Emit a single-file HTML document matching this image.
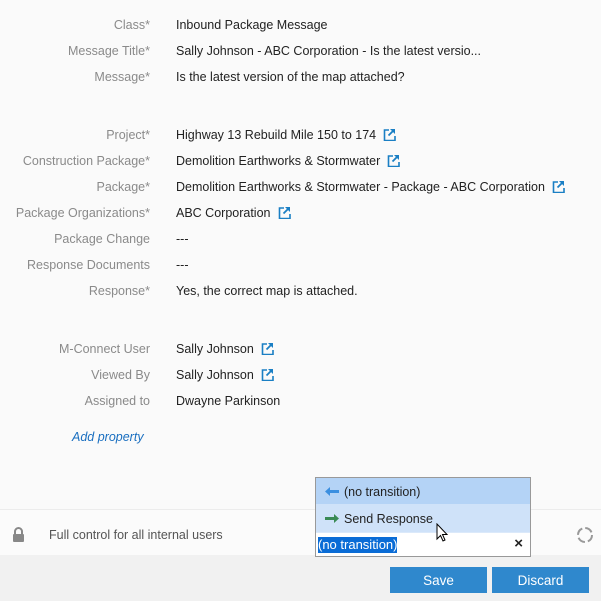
<html><head><style>
body{margin:0;width:601px;height:601px;background:#fafafa;font-family:"Liberation Sans",sans-serif;font-size:12.5px;color:#222;position:relative;overflow:hidden}
.r{position:absolute;left:0;height:20px;line-height:22px;white-space:nowrap}
.l{position:absolute;right:451px;color:#8a8a8a;text-align:right}
.v{position:absolute;left:176px}
.ic{display:inline-block;vertical-align:-2px;margin-left:7px}
.bar{position:absolute;left:0;top:509px;width:601px;height:46px;background:#fbfbfb;border-top:1px solid #ececec}
.foot{position:absolute;left:0;top:555px;width:601px;height:46px;background:#f1f1f1}
.btn{position:absolute;top:567px;height:26px;line-height:28px;background:#2f88cd;color:#fff;text-align:center;font-size:13.5px}
</style></head><body>
<div class="bar"></div><div class="foot"></div>
<svg width="0" height="0" style="position:absolute"><defs><g id="ext"><path d="M6 2H1.5v10.5H12V8" fill="none" stroke="#1a7fc4" stroke-width="1.6"/><path d="M7 1h5v5z" fill="#1a7fc4"/><path d="M5.5 7.5L11 2" stroke="#1a7fc4" stroke-width="1.8"/></g></defs></svg>
<div class="r" style="top:14px;width:601px"><span class="l">Class*</span><span class="v">Inbound Package Message</span></div>
<div class="r" style="top:40px;width:601px"><span class="l">Message Title*</span><span class="v">Sally Johnson - ABC Corporation - Is the latest versio...</span></div>
<div class="r" style="top:66px;width:601px"><span class="l">Message*</span><span class="v">Is the latest version of the map attached?</span></div>
<div class="r" style="top:124px;width:601px"><span class="l">Project*</span><span class="v">Highway 13 Rebuild Mile 150 to 174<svg class="ic" width="13" height="13"><use href="#ext"/></svg></span></div>
<div class="r" style="top:150px;width:601px"><span class="l">Construction Package*</span><span class="v">Demolition Earthworks &amp; Stormwater<svg class="ic" width="13" height="13"><use href="#ext"/></svg></span></div>
<div class="r" style="top:176px;width:601px"><span class="l">Package*</span><span class="v">Demolition Earthworks &amp; Stormwater - Package - ABC Corporation<svg class="ic" width="13" height="13"><use href="#ext"/></svg></span></div>
<div class="r" style="top:202px;width:601px"><span class="l">Package Organizations*</span><span class="v">ABC Corporation<svg class="ic" width="13" height="13"><use href="#ext"/></svg></span></div>
<div class="r" style="top:228px;width:601px"><span class="l">Package Change</span><span class="v">---</span></div>
<div class="r" style="top:254px;width:601px"><span class="l">Response Documents</span><span class="v">---</span></div>
<div class="r" style="top:280px;width:601px"><span class="l">Response*</span><span class="v">Yes, the correct map is attached.</span></div>
<div class="r" style="top:338px;width:601px"><span class="l">M-Connect User</span><span class="v">Sally Johnson<svg class="ic" width="13" height="13"><use href="#ext"/></svg></span></div>
<div class="r" style="top:364px;width:601px"><span class="l">Viewed By</span><span class="v">Sally Johnson<svg class="ic" width="13" height="13"><use href="#ext"/></svg></span></div>
<div class="r" style="top:390px;width:601px"><span class="l">Assigned to</span><span class="v">Dwayne Parkinson</span></div>
<div class="r" style="top:426px;left:72px;color:#1a6fc0;font-style:italic">Add property</div>
<svg style="position:absolute;left:12px;top:527px" width="13" height="15"><path d="M3 7V4.5a3.5 3.5 0 0 1 7 0V7" fill="none" stroke="#888" stroke-width="2"/><rect x="1" y="7" width="11" height="8" rx="1" fill="#888"/></svg>
<div class="r" style="top:524px;left:49px;color:#555">Full control for all internal users</div>
<svg style="position:absolute;left:575px;top:525px" width="20" height="20"><circle cx="10" cy="10" r="7" fill="none" stroke="#999" stroke-width="2" stroke-dasharray="8 3"/></svg>
<div style="position:absolute;left:315px;top:477px;width:214px;height:55px;border:1px solid #999;background:#dbe9fa">
<div style="height:26px;line-height:28px;background:#b4d3f6;padding-left:28px;position:relative"><svg style="position:absolute;left:9px;top:9px" width="14" height="9"><path d="M0 4.5L5 0v3h9v3H5v3z" fill="#3b8fe0"/></svg>(no transition)</div>
<div style="height:28px;line-height:30px;background:#cfe2f9;padding-left:28px;position:relative"><svg style="position:absolute;left:9px;top:10px" width="14" height="9"><path d="M14 4.5L9 0v3H0v3h9v3z" fill="#3a8a55"/></svg>Send Response</div>
</div>
<div style="position:absolute;left:315px;top:533px;width:214px;height:23px;border:1px solid #999;border-top:none;background:#fff">
<span style="position:absolute;left:2px;top:4px;background:#0a6cd6;color:#fff;line-height:16px;font-size:13px">(no transition)</span>
<span style="position:absolute;right:7px;top:2px;font-size:15px;font-weight:bold">×</span></div>
<svg style="position:absolute;left:436px;top:523px" width="14" height="20"><path d="M1 1v15l3.5-3.5 2.5 5.5 2-1-2.5-5.5H11z" fill="#fff" stroke="#000" stroke-width="1"/></svg>
<div class="btn" style="left:390px;width:97px">Save</div>
<div class="btn" style="left:492px;width:97px">Discard</div>
</body></html>
